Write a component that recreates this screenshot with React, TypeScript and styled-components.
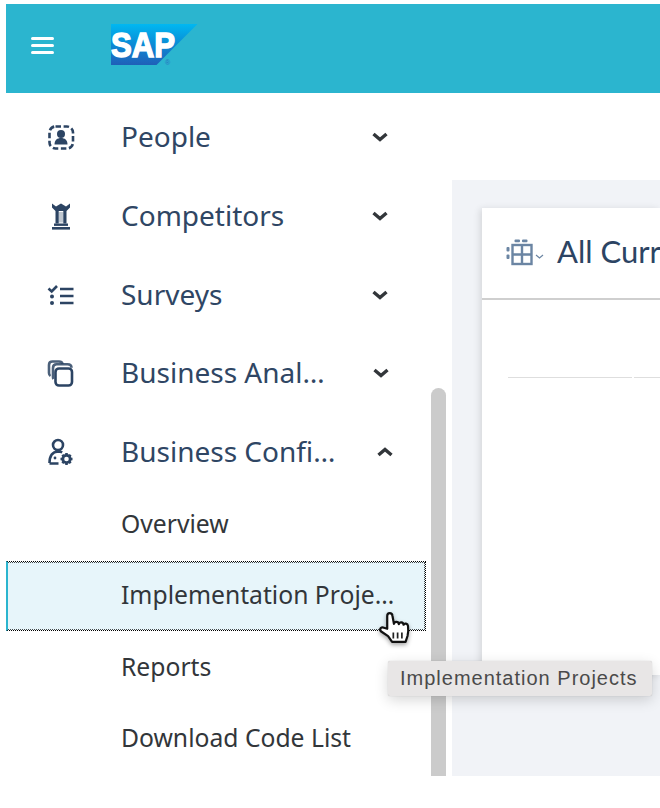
import React from "react";
import styled, { createGlobalStyle } from "styled-components";

const Global = createGlobalStyle`
  html, body { margin: 0; padding: 0; background: #fff; }
  body { font-family: "Noto Sans", "Open Sans", sans-serif; }
`;

const Page = styled.div`
  position: relative;
  width: 660px;
  height: 808px;
  padding: 4px 0 32px 6px;
  box-sizing: border-box;
  overflow: hidden;
  display: flex;
  flex-direction: column;
`;

const Header = styled.header`
  flex: 0 0 89px;
  background: #2bb5cf;
  display: flex;
  align-items: center;
  padding-left: 25px;
  gap: 57px;
`;

const Menu = styled.div`
  display: flex;
  flex-direction: column;
  gap: 4px;
  width: 23px;
  margin-top: -7px;
`;

const MenuLine = styled.span`
  display: block;
  height: 3px;
  border-radius: 2px;
  background: #fff;
`;

const Logo = styled.svg`
  display: block;
  margin-top: -7px;
`;

const Body = styled.div`
  flex: 1;
  display: flex;
  min-height: 0;
`;

const Sidebar = styled.nav`
  position: relative;
  flex: 0 0 446px;
  display: flex;
  flex-direction: column;
  padding-top: 5px;
  box-sizing: border-box;
`;

const Scrollbar = styled.div`
  position: absolute;
  left: 425px;
  top: 295px;
  bottom: 0;
  width: 15px;
  background: #cbcbcb;
  border-radius: 8px 8px 0 0;
`;

const Row = styled.div`
  flex: 0 0 78.7px;
  display: flex;
  align-items: center;
  padding-left: 41px;
  box-sizing: border-box;
`;

const IconSlot = styled.div`
  flex: 0 0 28px;
  height: 28px;
  display: flex;
  align-items: center;
  justify-content: center;
  color: #2c4463;
  margin-right: 46px;
`;

const Label = styled.span<{ $w: number }>`
  flex: 0 0 ${(p) => p.$w}px;
  margin-top: -2px;
  font-size: 28px;
  line-height: 36px;
  color: #2f4664;
  white-space: nowrap;
  overflow: hidden;
  text-overflow: ellipsis;
`;

const Chevron = styled.svg<{ $gap: number }>`
  display: block;
  margin-left: ${(p) => p.$gap}px;
  color: #32363a;
`;

const SubList = styled.div`
  display: flex;
  flex-direction: column;
  margin-top: -2.500px;
`;

const SubRow = styled.div<{ $active?: boolean }>`
  position: relative;
  flex: 0 0 71.5px;
  height: 71.5px;
  display: flex;
  align-items: center;
  width: 420px;
  box-sizing: border-box;
  padding-left: 115px;
  ${(p) =>
    p.$active &&
    `
    background: #e7f5fa;
    background-clip: padding-box;
    height: 70px;
    flex-basis: 70px;
    margin: 0.75px 0;
    border: 1px dotted #000;
    border-left: 2px solid #2bb5cf;
    padding-left: 113px;
    &::after {
      content: "";
      position: absolute;
      inset: 0;
      border: 1px dotted rgba(0, 0, 0, 0.7);
      border-left: none;
    }
  `}
`;

const SubLabel = styled.span`
  width: 276px;
  margin-top: -2px;
  font-size: 24.700px;
  line-height: 32px;
  color: #32363a;
  white-space: nowrap;
  overflow: hidden;
  text-overflow: ellipsis;
`;

const Main = styled.main`
  flex: 1;
  min-width: 0;
  margin-top: 87px;
  background: #f1f3f7;
  padding: 28px 0 101px 30px;
  box-sizing: border-box;
  display: flex;
`;

const Card = styled.section`
  flex: 1;
  min-width: 0;
  background: #fff;
  box-shadow: -2px 1px 7px rgba(0, 0, 0, 0.12);
  display: flex;
  flex-direction: column;
`;

const CardHeader = styled.div`
  border-bottom: 2px solid #cfcfcf;
  display: flex;
  align-items: center;
  padding: 0 0 2px 24px;
  height: 88px;
  white-space: nowrap;
  overflow: hidden;
`;

const GridSvg = styled.svg`
  flex: none;
  display: block;
`;

const CardTitle = styled.span`
  font-family: "Lato", "Open Sans", sans-serif;
  font-size: 31px;
  color: #2c4463;
  margin-left: 11px;
  margin-top: -3px;
`;

const TableHead = styled.div`
  display: flex;
  gap: 2px;
  margin: 77px 0 0 26px;
`;

const HeadCell = styled.div<{ $w: number }>`
  flex: 0 0 ${(p) => p.$w}px;
  height: 1px;
  background: #dedede;
`;

const Tooltip = styled.div`
  position: absolute;
  left: 388px;
  top: 661px;
  width: 264px;
  height: 35px;
  box-sizing: border-box;
  background: #e8e6e6;
  border-radius: 2px;
  box-shadow: 0 4px 14px rgba(0, 0, 0, 0.16), 0 0 1px rgba(0, 0, 0, 0.25);
  font-family: "Liberation Sans", Arial, sans-serif;
  font-size: 20px;
  letter-spacing: 1px;
  line-height: 35px;
  padding-left: 12px;
  color: #4a4a4a;
  white-space: nowrap;
`;

const Cursor = styled.svg`
  position: absolute;
  left: 375px;
  top: 608px;
  filter: drop-shadow(0 2px 2px rgba(0, 0, 0, 0.35));
`;

const ChevronDown = ({ gap }: { gap: number }) => (
  <Chevron $gap={gap} width="16" height="10" viewBox="0 0 16 10" fill="none">
    <path d="M1.5 2 L8 7.6 L14.5 2" stroke="currentColor" strokeWidth="3.400" />
  </Chevron>
);

const ChevronUp = ({ gap }: { gap: number }) => (
  <Chevron $gap={gap} width="16" height="10" viewBox="0 0 16 10" fill="none">
    <path d="M1.5 8 L8 2.4 L14.5 8" stroke="currentColor" strokeWidth="3.400" />
  </Chevron>
);

const PeopleIcon = () => (
  <svg width="28" height="28" viewBox="0 0 28 28" fill="none">
    <rect x="2.500" y="3.500" width="23.500" height="22" rx="6" stroke="currentColor" strokeWidth="2.600" strokeDasharray="5.500 2.600" />
    <circle cx="14" cy="11" r="4" fill="currentColor" />
    <path d="M7.500 21.500c0-4.500 2.800-6.500 6.500-6.500s6.500 2 6.500 6.500z" fill="currentColor" />
  </svg>
);

const RookIcon = () => (
  <svg width="28" height="28" viewBox="0 0 28 28" fill="currentColor">
    <path d="M5 1.500L9 4.500 14 1.500l5 3 4-3v4L19.500 9h-11L5 5.500z" />
    <path d="M8.500 9h3.200v12.500H8.500zM16.300 9h3.200v12.500h-3.200z" />
    <rect x="11.700" y="10" width="4.600" height="10.500" opacity="0.3" />
    <rect x="7" y="21.500" width="14" height="2.400" />
    <rect x="5" y="25" width="18" height="2.600" />
  </svg>
);

const SurveyIcon = () => (
  <svg width="28" height="28" viewBox="0 0 28 28" fill="none" stroke="currentColor">
    <path d="M1.500 7.500l3.200 3 5.300-5.500" strokeWidth="2.600" />
    <path d="M13 8h13.500M13 15h13.500M13 22h13.500" strokeWidth="2.600" />
    <circle cx="5" cy="15.500" r="2" fill="currentColor" stroke="none" />
    <circle cx="5" cy="22" r="2" fill="currentColor" stroke="none" />
  </svg>
);

const CopiesIcon = () => (
  <svg width="28" height="28" viewBox="0 0 28 28" fill="none" stroke="currentColor" strokeWidth="2.600">
    <path d="M3.500 17c-1-.600-1.500-1.600-1.500-3V6c0-2.500 1.200-3.500 3.500-3.500h6.500c2 0 3.200.8 3.700 2.500" opacity="0.85" />
    <path d="M6.500 20c-.3-.500-.5-1.200-.5-2V9c0-2.500 1.200-3.800 3.500-3.800h11c2.500 0 4 1.200 4 3.500" opacity="0.85" />
    <rect x="8.500" y="9.500" width="16.500" height="17" rx="3.500" />
  </svg>
);

const ConfigIcon = () => (
  <svg width="28" height="28" viewBox="0 0 28 28" fill="none" stroke="currentColor">
    <circle cx="11" cy="7" r="5" strokeWidth="2.600" />
    <path d="M2.500 25c0-6.500 2.500-11 8.500-11.500 1.500 0 3 .2 4.200.8M2.500 25.500h9" strokeWidth="2.600" />
    <circle cx="8" cy="20" r="1.400" fill="currentColor" stroke="none" />
    <circle cx="19.500" cy="21" r="3.700" strokeWidth="2.800" />
    <path d="M19.500 15v2.400M19.500 24.600V27M13.500 21h2.400M23.100 21h2.400M15.300 16.800l1.700 1.700M22 23.500l1.700 1.700M15.300 25.200l1.700-1.700M22 18.500l1.700-1.700" strokeWidth="2.600" />
  </svg>
);

const GridIcon = () => (
  <GridSvg width="40" height="28" viewBox="0 0 40 28" fill="none">
    <g fill="#6b85a3">
      <rect x="0.500" y="9" width="3" height="4.500" rx="1" />
      <rect x="0.500" y="16.500" width="3" height="4.500" rx="1" />
      <rect x="8.500" y="1.500" width="5.500" height="2.800" rx="1" />
      <rect x="16" y="1.500" width="5.500" height="2.800" rx="1" />
    </g>
    <rect x="6.500" y="7" width="19" height="19" fill="none" stroke="#6b85a3" strokeWidth="2.400" />
    <path d="M16 7v19M6.500 16.500h19" stroke="#6b85a3" strokeWidth="2.400" />
    <path d="M30 17l3.500 3 3.500-3" stroke="#6b85a3" strokeWidth="1.200" fill="none" />
  </GridSvg>
);

const SapLogo = () => (
  <Logo width="87" height="42" viewBox="0 0 87 42">
    <defs>
      <linearGradient id="sapBlue" x1="0" y1="0" x2="0" y2="1">
        <stop offset="0" stopColor="#00b8f1" />
        <stop offset="0.45" stopColor="#0a8fd8" />
        <stop offset="1" stopColor="#1f5fb8" />
      </linearGradient>
    </defs>
    <path d="M0 0H86.500L45.500 41H0z" fill="url(#sapBlue)" />
    <text x="0" y="33" fontFamily="Liberation Sans, Arial, sans-serif" fontWeight="700" fontSize="35" textLength="64" lengthAdjust="spacingAndGlyphs" fill="#fff" stroke="#fff" strokeWidth="1.500">SAP</text>
    <text x="54" y="41" fontFamily="Liberation Sans, Arial, sans-serif" fontSize="7" fill="#2a6fc0">®</text>
  </Logo>
);

const HandCursor = () => (
  <Cursor width="44" height="44" viewBox="0 0 36 36">
    <path
      d="M10 17V6.500c0-3 4-3 4.300 0L15.500 13c.4-2.300 3.700-2.200 4 .2.500-2 3.600-1.800 3.900.5.700-1.500 3.300-1.200 3.600.9.400 3 .4 5.500-.4 8.300l-1.600 4.800H14l-3.300-4.700L4.800 19c-1.500-2 .6-4 2.500-2.800z"
      fill="#fff"
      stroke="#111"
      strokeWidth="1.800"
      strokeLinejoin="round"
    />
    <path d="M15 20v5M18.500 20v5M22 20v5" stroke="#222" strokeWidth="1.400" />
  </Cursor>
);

const items = [
  { label: "People", icon: <PeopleIcon /> , w: 214, gap: 37 },
  { label: "Competitors", icon: <RookIcon />, w: 214, gap: 37 },
  { label: "Surveys", icon: <SurveyIcon />, w: 214, gap: 37 },
  { label: "Business Analytics", icon: <CopiesIcon />, w: 214, gap: 38 },
];

const subItems = ["Overview", "Implementation Projects", "Reports", "Download Code List"];

export default function App() {
  return (
    <Page>
      <Global />
      <Header>
        <Menu>
          <MenuLine />
          <MenuLine />
          <MenuLine />
        </Menu>
        <SapLogo />
      </Header>
      <Body>
        <Sidebar>
          {items.map((item) => (
            <Row key={item.label}>
              <IconSlot>{item.icon}</IconSlot>
              <Label $w={item.w}>{item.label}</Label>
              <ChevronDown gap={item.gap} />
            </Row>
          ))}
          <Row>
            <IconSlot>
              <ConfigIcon />
            </IconSlot>
            <Label $w={221}>Business Configuration</Label>
            <ChevronUp gap={35} />
          </Row>
          <SubList>
            {subItems.map((label) => (
              <SubRow key={label} $active={label === "Implementation Projects"}>
                <SubLabel>{label}</SubLabel>
              </SubRow>
            ))}
          </SubList>
          <Scrollbar />
        </Sidebar>
        <Main>
          <Card>
            <CardHeader>
              <GridIcon />
              <CardTitle>All Current Projects</CardTitle>
            </CardHeader>
            <TableHead>
              <HeadCell $w={124} />
              <HeadCell $w={124} />
            </TableHead>
          </Card>
        </Main>
      </Body>
      <HandCursor />
      <Tooltip>Implementation Projects</Tooltip>
    </Page>
  );
}
